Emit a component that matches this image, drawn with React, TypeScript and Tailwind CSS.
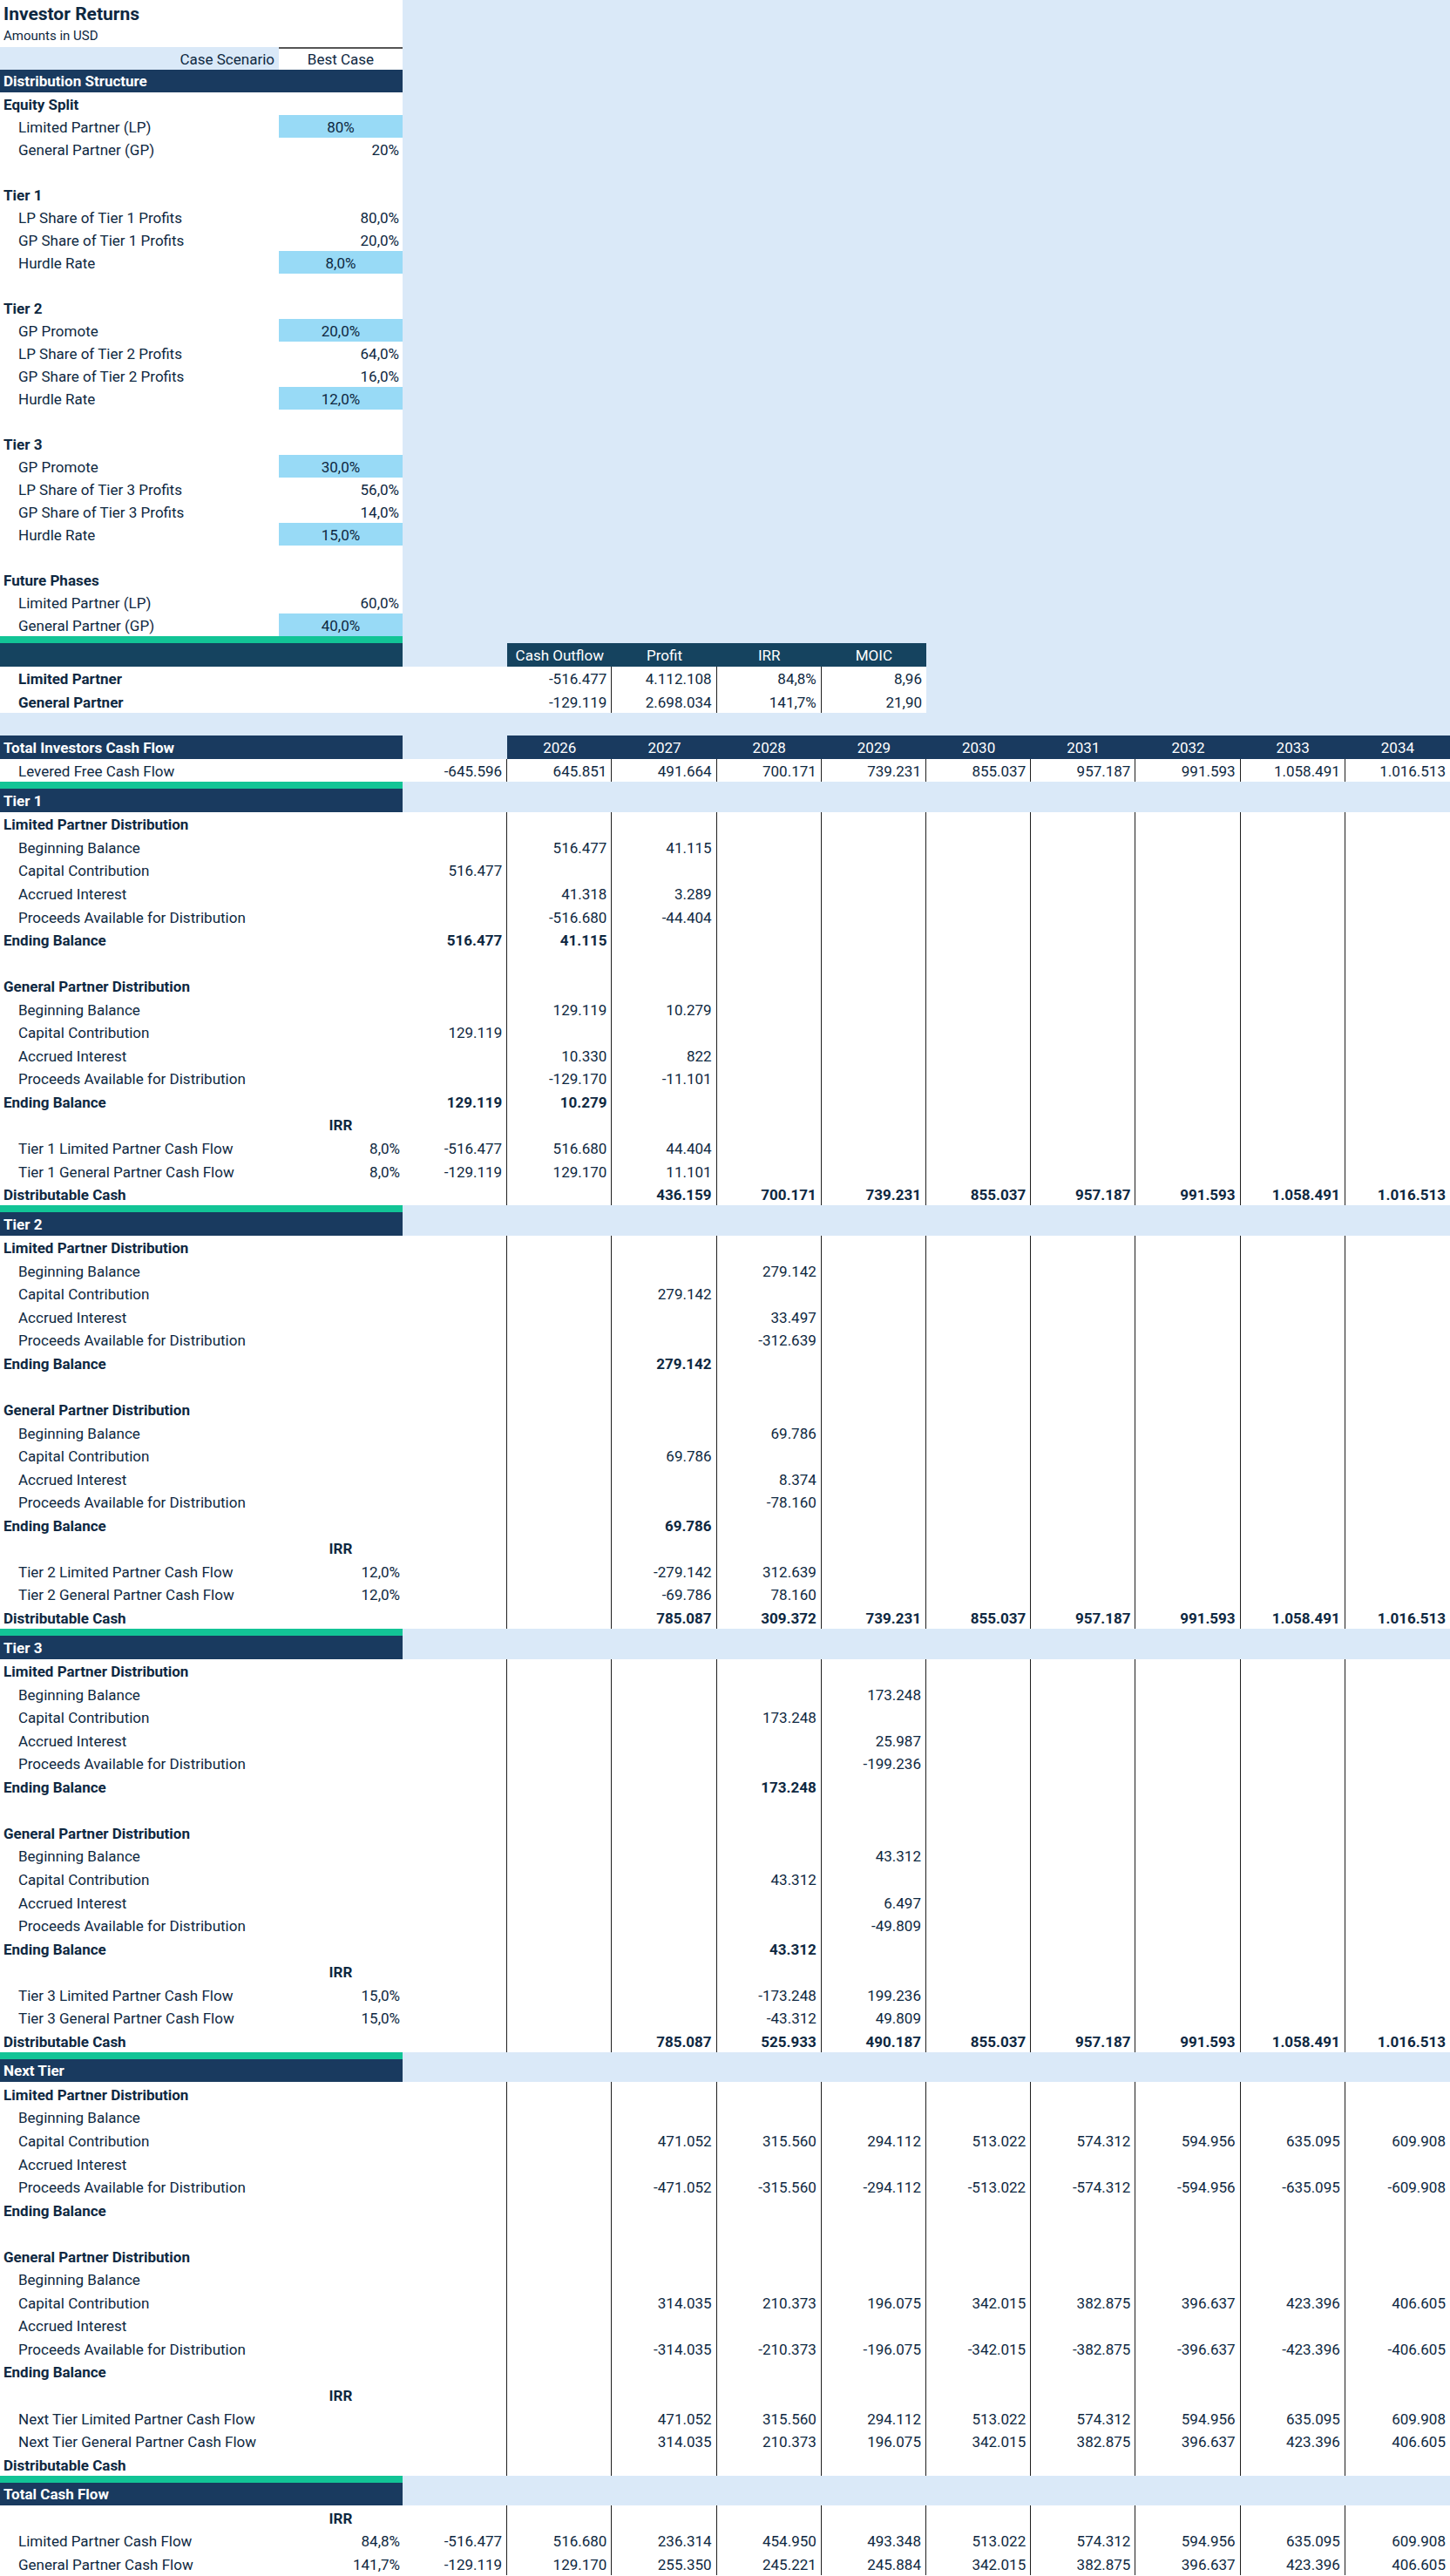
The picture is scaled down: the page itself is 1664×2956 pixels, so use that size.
import React from 'react';

type V = string | null;
type Cols = Partial<Record<'C' | 'D' | 'E' | 'F' | 'G' | 'H' | 'I' | 'J' | 'K' | 'L', string>>;

interface DataRow {
  label?: string;
  indent?: boolean;
  bold?: boolean;
  b?: string;
  irr?: boolean;
  vals?: V[];
  valsBold?: boolean;
}

const KEYS = ['C', 'D', 'E', 'F', 'G', 'H', 'I', 'J', 'K', 'L'] as const;
const cols = (c: Cols = {}): V[] => KEYS.map((k) => c[k] ?? null);

interface TopRow {
  label?: string;
  indent?: boolean;
  bold?: boolean;
  value?: string;
  input?: boolean;
}

const top: TopRow[] = [
  { label: 'Equity Split', bold: true },
  { label: 'Limited Partner (LP)', indent: true, value: '80%', input: true },
  { label: 'General Partner (GP)', indent: true, value: '20%' },
  {},
  { label: 'Tier 1', bold: true },
  { label: 'LP Share of Tier 1 Profits', indent: true, value: '80,0%' },
  { label: 'GP Share of Tier 1 Profits', indent: true, value: '20,0%' },
  { label: 'Hurdle Rate', indent: true, value: '8,0%', input: true },
  {},
  { label: 'Tier 2', bold: true },
  { label: 'GP Promote', indent: true, value: '20,0%', input: true },
  { label: 'LP Share of Tier 2 Profits', indent: true, value: '64,0%' },
  { label: 'GP Share of Tier 2 Profits', indent: true, value: '16,0%' },
  { label: 'Hurdle Rate', indent: true, value: '12,0%', input: true },
  {},
  { label: 'Tier 3', bold: true },
  { label: 'GP Promote', indent: true, value: '30,0%', input: true },
  { label: 'LP Share of Tier 3 Profits', indent: true, value: '56,0%' },
  { label: 'GP Share of Tier 3 Profits', indent: true, value: '14,0%' },
  { label: 'Hurdle Rate', indent: true, value: '15,0%', input: true },
  {},
  { label: 'Future Phases', bold: true },
  { label: 'Limited Partner (LP)', indent: true, value: '60,0%' },
  { label: 'General Partner (GP)', indent: true, value: '40,0%', input: true },
];

interface Dist {
  bb?: Cols;
  cc?: Cols;
  ai?: Cols;
  pad?: Cols;
  eb?: Cols;
}

interface Section {
  title: string;
  prefix: string;
  lp: Dist;
  gp: Dist;
  rate?: string;
  lpCf: Cols;
  gpCf: Cols;
  dist: Cols;
}

const TAIL = { H: '855.037', I: '957.187', J: '991.593', K: '1.058.491', L: '1.016.513' };
const NT_LP = { E: '471.052', F: '315.560', G: '294.112', H: '513.022', I: '574.312', J: '594.956', K: '635.095', L: '609.908' };
const NT_LP_NEG = { E: '-471.052', F: '-315.560', G: '-294.112', H: '-513.022', I: '-574.312', J: '-594.956', K: '-635.095', L: '-609.908' };
const NT_GP = { E: '314.035', F: '210.373', G: '196.075', H: '342.015', I: '382.875', J: '396.637', K: '423.396', L: '406.605' };
const NT_GP_NEG = { E: '-314.035', F: '-210.373', G: '-196.075', H: '-342.015', I: '-382.875', J: '-396.637', K: '-423.396', L: '-406.605' };

const sections: Section[] = [
  {
    title: 'Tier 1',
    prefix: 'Tier 1 ',
    lp: {
      bb: { D: '516.477', E: '41.115' },
      cc: { C: '516.477' },
      ai: { D: '41.318', E: '3.289' },
      pad: { D: '-516.680', E: '-44.404' },
      eb: { C: '516.477', D: '41.115' },
    },
    gp: {
      bb: { D: '129.119', E: '10.279' },
      cc: { C: '129.119' },
      ai: { D: '10.330', E: '822' },
      pad: { D: '-129.170', E: '-11.101' },
      eb: { C: '129.119', D: '10.279' },
    },
    rate: '8,0%',
    lpCf: { C: '-516.477', D: '516.680', E: '44.404' },
    gpCf: { C: '-129.119', D: '129.170', E: '11.101' },
    dist: { E: '436.159', F: '700.171', G: '739.231', ...TAIL },
  },
  {
    title: 'Tier 2',
    prefix: 'Tier 2 ',
    lp: {
      bb: { F: '279.142' },
      cc: { E: '279.142' },
      ai: { F: '33.497' },
      pad: { F: '-312.639' },
      eb: { E: '279.142' },
    },
    gp: {
      bb: { F: '69.786' },
      cc: { E: '69.786' },
      ai: { F: '8.374' },
      pad: { F: '-78.160' },
      eb: { E: '69.786' },
    },
    rate: '12,0%',
    lpCf: { E: '-279.142', F: '312.639' },
    gpCf: { E: '-69.786', F: '78.160' },
    dist: { E: '785.087', F: '309.372', G: '739.231', ...TAIL },
  },
  {
    title: 'Tier 3',
    prefix: 'Tier 3 ',
    lp: {
      bb: { G: '173.248' },
      cc: { F: '173.248' },
      ai: { G: '25.987' },
      pad: { G: '-199.236' },
      eb: { F: '173.248' },
    },
    gp: {
      bb: { G: '43.312' },
      cc: { F: '43.312' },
      ai: { G: '6.497' },
      pad: { G: '-49.809' },
      eb: { F: '43.312' },
    },
    rate: '15,0%',
    lpCf: { F: '-173.248', G: '199.236' },
    gpCf: { F: '-43.312', G: '49.809' },
    dist: { E: '785.087', F: '525.933', G: '490.187', ...TAIL },
  },
  {
    title: 'Next Tier',
    prefix: 'Next Tier ',
    lp: { cc: NT_LP, pad: NT_LP_NEG },
    gp: { cc: NT_GP, pad: NT_GP_NEG },
    lpCf: NT_LP,
    gpCf: NT_GP,
    dist: {},
  },
];

function distRows(kind: string, d: Dist): DataRow[] {
  return [
    { label: `${kind} Partner Distribution`, bold: true },
    { label: 'Beginning Balance', indent: true, vals: cols(d.bb) },
    { label: 'Capital Contribution', indent: true, vals: cols(d.cc) },
    { label: 'Accrued Interest', indent: true, vals: cols(d.ai) },
    { label: 'Proceeds Available for Distribution', indent: true, vals: cols(d.pad) },
    { label: 'Ending Balance', bold: true, vals: cols(d.eb), valsBold: true },
  ];
}

function sectionRows(s: Section): DataRow[] {
  return [
    ...distRows('Limited', s.lp),
    {},
    ...distRows('General', s.gp),
    { irr: true },
    { label: `${s.prefix}Limited Partner Cash Flow`, indent: true, b: s.rate, vals: cols(s.lpCf) },
    { label: `${s.prefix}General Partner Cash Flow`, indent: true, b: s.rate, vals: cols(s.gpCf) },
    { label: 'Distributable Cash', bold: true, vals: cols(s.dist), valsBold: true },
  ];
}

function Data({ r }: { r: DataRow }) {
  const vals = r.vals ?? cols();
  return (
    <div className="grid h-[26.55px] grid-cols-[320px_142px_repeat(10,minmax(0,1fr))] bg-white">
      <div
        className={`flex items-end whitespace-nowrap pb-[3px] ${r.indent ? 'pl-[21px]' : 'pl-[4px]'} ${r.bold ? 'font-bold' : ''}`}
      >
        {r.label}
      </div>
      <div className={`flex items-end pb-[3px] ${r.irr ? 'justify-center font-bold' : 'justify-end pr-[3px]'}`}>
        {r.irr ? 'IRR' : r.b}
      </div>
      {vals.map((v, i) => (
        <div
          key={i}
          className={`flex items-end justify-end pb-[3px] pr-[5px] ${i < 9 ? 'border-r-[1.5px] border-[#1f1f1f]' : ''} ${r.valsBold ? 'font-bold' : ''}`}
        >
          {v}
        </div>
      ))}
    </div>
  );
}

function GreenBar() {
  return (
    <div className="flex h-[8px]">
      <div className="w-[462px] bg-[#12c496]" />
      <div className="flex-1 bg-[#dae9f8]" />
    </div>
  );
}

function TierHeader({ title }: { title: string }) {
  return (
    <div className="flex h-[26.55px]">
      <div className="flex w-[462px] items-end bg-[#193a5f] pb-[4px] pl-[4px] font-bold text-white">{title}</div>
      <div className="flex-1 bg-[#dae9f8]" />
    </div>
  );
}

const years = ['2026', '2027', '2028', '2029', '2030', '2031', '2032', '2033', '2034'];

export default function App() {
  return (
    <div className="min-h-[2956px] w-[1664px] bg-white font-['Roboto',sans-serif] text-[17px] leading-[18px] text-[#0e2841]">
      {/* Distribution structure inputs */}
      <div className="flex">
        <div className="w-[462px]">
          <div className="flex h-[28px] items-end pl-[4px] text-[21px] font-bold leading-[24px]">Investor Returns</div>
          <div className="flex h-[26px] items-end pb-[4px] pl-[4px] text-[15px]">Amounts in USD</div>
          <div className="grid h-[26px] grid-cols-[320px_142px]">
            <div className="flex items-end justify-end bg-[#dae9f8] pb-[3px] pr-[5px]">Case Scenario</div>
            <div className="flex items-end justify-center border-t-2 border-[#555] pb-[3px]">Best Case</div>
          </div>
          <div className="flex h-[26px] items-end bg-[#193a5f] pb-[4px] pl-[4px] font-bold text-white">
            Distribution Structure
          </div>
          {top.map((r, i) => (
            <div key={i} className="grid h-[26px] grid-cols-[320px_142px]">
              <div
                className={`flex items-end whitespace-nowrap pb-[3px] ${r.indent ? 'pl-[21px]' : 'pl-[4px]'} ${r.bold ? 'font-bold' : ''}`}
              >
                {r.label}
              </div>
              <div
                className={`flex items-end pb-[3px] ${r.input ? 'justify-center bg-[#98daf6]' : 'justify-end pr-[4px]'}`}
              >
                {r.value}
              </div>
            </div>
          ))}
        </div>
        <div className="flex-1 bg-[#dae9f8]" />
      </div>
      <GreenBar />

      {/* Returns summary */}
      <div className="grid h-[26.55px] grid-cols-[320px_142px_repeat(10,minmax(0,1fr))] text-white">
        <div className="col-span-2 bg-[#15435f]" />
        <div className="bg-[#dae9f8]" />
        {['Cash Outflow', 'Profit', 'IRR', 'MOIC'].map((h) => (
          <div key={h} className="flex items-end justify-center bg-[#15435f] pb-[4px]">
            {h}
          </div>
        ))}
        <div className="col-span-5 bg-[#dae9f8]" />
      </div>
      {[
        ['Limited Partner', '-516.477', '4.112.108', '84,8%', '8,96'],
        ['General Partner', '-129.119', '2.698.034', '141,7%', '21,90'],
      ].map(([label, ...v]) => (
        <div key={label} className="grid h-[26.55px] grid-cols-[320px_142px_repeat(10,minmax(0,1fr))]">
          <div className="flex items-end bg-white pb-[3px] pl-[21px] font-bold">{label}</div>
          <div className="bg-white" />
          <div className="bg-white" />
          {v.map((x, i) => (
            <div
              key={i}
              className={`flex items-end justify-end bg-white pb-[3px] pr-[5px] ${i < 3 ? 'border-r-[1.5px] border-[#1f1f1f]' : ''}`}
            >
              {x}
            </div>
          ))}
          <div className="col-span-5 bg-[#dae9f8]" />
        </div>
      ))}
      <div className="h-[26.55px] bg-[#dae9f8]" />

      {/* Total investors cash flow */}
      <div className="grid h-[26.55px] grid-cols-[320px_142px_repeat(10,minmax(0,1fr))] text-white">
        <div className="col-span-2 flex items-end bg-[#193a5f] pb-[4px] pl-[4px] font-bold">Total Investors Cash Flow</div>
        <div className="bg-[#dae9f8]" />
        {years.map((y) => (
          <div key={y} className="flex items-end justify-center bg-[#193a5f] pb-[4px]">
            {y}
          </div>
        ))}
      </div>
      <Data
        r={{
          label: 'Levered Free Cash Flow',
          indent: true,
          vals: cols({ C: '-645.596', D: '645.851', E: '491.664', F: '700.171', G: '739.231', ...TAIL }),
        }}
      />

      {sections.map((s) => (
        <div key={s.title}>
          <GreenBar />
          <TierHeader title={s.title} />
          {sectionRows(s).map((r, i) => (
            <Data key={i} r={r} />
          ))}
        </div>
      ))}

      <GreenBar />
      <TierHeader title="Total Cash Flow" />
      <Data r={{ irr: true }} />
      <Data
        r={{
          label: 'Limited Partner Cash Flow',
          indent: true,
          b: '84,8%',
          vals: cols({ C: '-516.477', D: '516.680', ...NT_LP, E: '236.314', F: '454.950', G: '493.348' }),
        }}
      />
      <Data
        r={{
          label: 'General Partner Cash Flow',
          indent: true,
          b: '141,7%',
          vals: cols({ C: '-129.119', D: '129.170', ...NT_GP, E: '255.350', F: '245.221', G: '245.884' }),
        }}
      />
    </div>
  );
}
